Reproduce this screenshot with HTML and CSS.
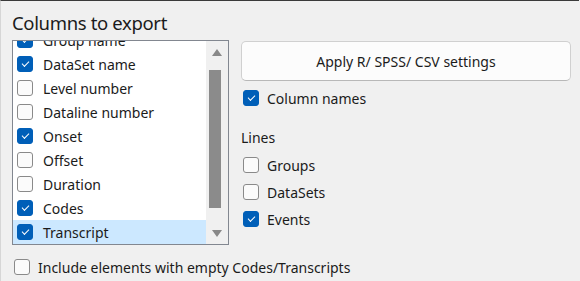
FILE: index.html
```html
<html>
	<head>
		<link rel="stylesheet" href="styles.css">
	</head>

	<body>
		<div class="frame">
			<div class="title">Columns to export</div>

			<div class="main">
				<div class="listbox">
					<div class="items">
						<div class="items-inner">
							<div class="row"><span class="box checked"></span>Group name</div>
							<div class="row"><span class="box checked"></span>DataSet name</div>
							<div class="row"><span class="box"></span>Level number</div>
							<div class="row"><span class="box"></span>Dataline number</div>
							<div class="row"><span class="box checked"></span>Onset</div>
							<div class="row"><span class="box"></span>Offset</div>
							<div class="row"><span class="box"></span>Duration</div>
							<div class="row"><span class="box checked"></span>Codes</div>
							<div class="row selected"><span class="box checked"></span>Transcript</div>
						</div>
					</div>
					<div class="scrollbar">
						<span class="arrow up"></span>
						<div class="track"><div class="thumb"></div></div>
						<span class="arrow down"></span>
					</div>
				</div>

				<div class="side">
					<button class="apply">Apply R/ SPSS/ CSV settings</button>
					<div class="check col-names"><span class="box checked"></span>Column names</div>

					<div class="label">Lines</div>
					<div class="lines">
						<div class="check"><span class="box"></span>Groups</div>
						<div class="check"><span class="box"></span>DataSets</div>
						<div class="check"><span class="box checked"></span>Events</div>
					</div>
				</div>
			</div>

			<div class="check bottom"><span class="box"></span>Include elements with empty Codes/Transcripts</div>
		</div>
	</body>
</html>
```

FILE: styles.css
```css
*{
	margin:0;
	padding:0;
	box-sizing:border-box;
}
body{
	background:#f0f0f0;
	font-family:"Noto Sans","Open Sans",sans-serif;
	font-size:14px;
	color:#1b1b1b;
}
.frame{
	border-top:1px solid #3a3a3a;
	border-left:1px solid #d6d6d6;
	height:281px;
	width:579px;
}
.title{
	font-size:18.5px;
	letter-spacing:-0.35px;
	line-height:24px;
	padding:10px 0 0 11px;
	height:39px;
}

.main{
	display:flex;
	gap:12px;
	padding-left:11px;
}

/* list */
.listbox{
	width:217px;
	height:205px;
	border:1px solid #828790;
	background:#fff;
	display:flex;
}
.items{
	width:193px;
	overflow:hidden;
}
.items-inner{
	margin-top:-13px;
}
.row{
	height:24px;
	display:flex;
	align-items:center;
	padding-left:4px;
	gap:10px;
}
.row.selected{
	background:#cce8ff;
}
.scrollbar{
	flex:1;
	background:#f0f0f0;
	display:flex;
	flex-direction:column;
	align-items:center;
	padding:8px 0 7px;
}
.track{
	flex:1;
	width:100%;
	padding:14px 0 22px 3px;
}
.thumb{
	width:12px;
	height:100%;
	background:#8b8b8b;
}
.arrow{
	width:0;
	height:0;
	border-left:5px solid transparent;
	border-right:5px solid transparent;
}
.arrow.up{
	border-bottom:7px solid #888;
}
.arrow.down{
	border-top:7px solid #888;
}

/* checkbox */
.box{
	width:16px;
	height:16px;
	border:1px solid #8a8a8a;
	border-radius:3px;
	background:#fbfbfb;
	flex:none;
	position:relative;
}
.box.checked{
	background:#005fb8;
	border-color:#005fb8;
}
.box.checked::after{
	content:"";
	position:absolute;
	left:4px;
	top:3px;
	width:6px;
	height:3px;
	border-left:1.3px solid #fff;
	border-bottom:1.3px solid #fff;
	transform:rotate(-45deg);
	transform-origin:center;
	margin-top:1px;
}

/* right side */
.side{
	width:330px;
}
.apply{
	display:block;
	width:330px;
	height:40px;
	margin-top:1px;
	background:#fcfcfc;
	border:1px solid #d0d0d0;
	border-bottom-color:#b8b8b8;
	border-radius:5px;
	font:inherit;
	color:#1b1b1b;
}
.check{
	display:flex;
	align-items:center;
	height:24px;
	gap:8px;
	padding-left:2px;
}
.col-names{
	margin-top:5px;
}
.label{
	margin-top:16px;
	line-height:24px;
}
.lines{
	margin-top:3px;
	display:flex;
	flex-direction:column;
	gap:3px;
}
.bottom{
	margin:10px 0 0 13px;
	padding-left:0;
}
```
